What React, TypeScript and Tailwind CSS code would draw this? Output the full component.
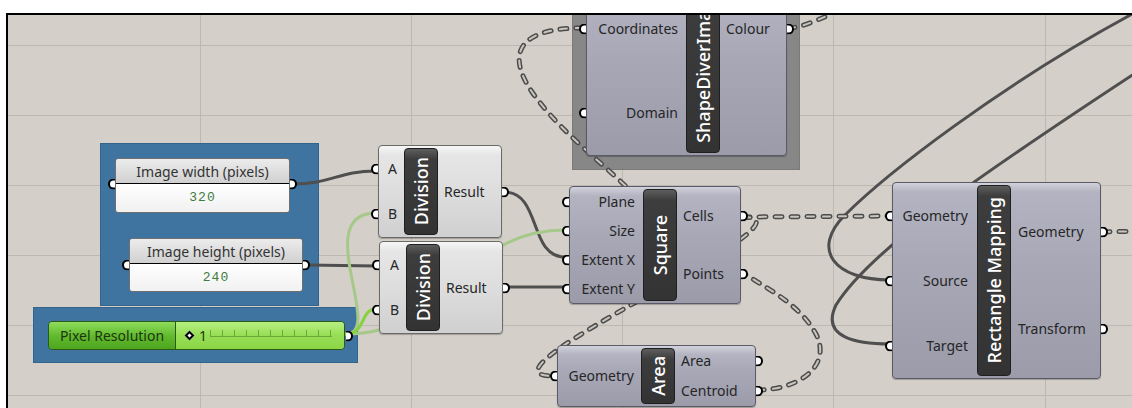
import React from "react";

type Slot = { label: string; grip?: boolean };

function Grip({ side }: { side: "in" | "out" }) {
  return side === "in" ? (
    <span className="absolute left-[-8px] top-1/2 -translate-y-1/2 w-[7px] h-[11px] rounded-l-full border-2 border-r-0 border-black bg-white" />
  ) : (
    <span className="absolute right-[-8px] top-1/2 -translate-y-1/2 w-[7px] h-[11px] rounded-r-full border-2 border-l-0 border-black bg-white" />
  );
}

function GhComponent({
  pos,
  leftW,
  name,
  inputs,
  outputs,
  light = false,
  clipName = false,
  padIn = "pr-[8px]",
  padOut = "pl-[6px]",
}: {
  pos: string;
  leftW: string;
  name: string;
  inputs: Slot[];
  outputs: Slot[];
  light?: boolean;
  clipName?: boolean;
  padIn?: string;
  padOut?: string;
}) {
  const body = light
    ? "bg-[linear-gradient(#f7f7f7_0px,#e6e6e6_9px,#dcdcdc_55%,#d0d0d0_100%)] border-[#6a6a6a]"
    : "bg-[linear-gradient(#d2d2dc_0px,#b3b3c1_9px,#a8a8b7_40%,#9b9baa_100%)] border-[#5a5a66]";
  return (
    <div className={`absolute flex rounded-[4px] border shadow-[0_1px_1px_rgba(0,0,0,0.25)] ${body} ${pos}`}>
      <div className={`flex flex-col ${leftW}`}>
        {inputs.map((s, i) => (
          <div key={i} className={`relative flex flex-1 items-center justify-end ${padIn}`}>
            {s.grip !== false && <Grip side="in" />}
            <span className="text-[14px] leading-none text-[#262626] whitespace-nowrap">{s.label}</span>
          </div>
        ))}
      </div>
      <div
        className={`my-[2px] w-[34px] flex flex-col items-center overflow-hidden rounded-[4px] border border-[#1f1f1f] bg-[linear-gradient(#5e5e5e_0px,#3d3d3d_10px,#333333_100%)] ${
          clipName ? "justify-end pb-[9px]" : "justify-center"
        }`}
      >
        <span className="[writing-mode:vertical-rl] rotate-180 text-[18px] leading-none font-medium text-white whitespace-nowrap">
          {name}
        </span>
      </div>
      <div className="flex flex-1 flex-col">
        {outputs.map((s, i) => (
          <div key={i} className={`relative flex flex-1 items-center ${padOut}`}>
            {s.grip !== false && <Grip side="out" />}
            <span className="text-[14px] leading-none text-[#262626] whitespace-nowrap">{s.label}</span>
          </div>
        ))}
      </div>
    </div>
  );
}

function Panel({ pos, title, value, gripTop }: { pos: string; title: string; value: string; gripTop: string }) {
  return (
    <div className={`absolute ${pos}`}>
      <div className="flex h-full flex-col overflow-hidden rounded-[3px] border border-[#6f6f6f]">
        <div className="flex h-[25px] items-center justify-center border-b border-black bg-[linear-gradient(#ececec,#d0d0d0)] text-[14px] text-[#333]">
          {title}
        </div>
        <div className="flex flex-1 items-center justify-center bg-[linear-gradient(#ffffff,#f1f1f1)] font-['Liberation_Mono',monospace] text-[13px] tracking-[1px] text-[#3d7b3d]">
          {value}
        </div>
      </div>
      <span className={`absolute left-[-7px] ${gripTop} -translate-y-1/2 w-[7px] h-[11px] rounded-l-full border-2 border-r-0 border-black bg-white`} />
      <span className={`absolute right-[-7px] ${gripTop} -translate-y-1/2 w-[7px] h-[11px] rounded-r-full border-2 border-l-0 border-black bg-white`} />
    </div>
  );
}

function ListWire({ d }: { d: string }) {
  return (
    <g fill="none" strokeLinecap="round">
      <path d={d} stroke="#4c4c4c" strokeWidth={5} strokeDasharray="7 9" />
      <path d={d} stroke="#c8c4be" strokeWidth={2} strokeDasharray="7 9" />
    </g>
  );
}

export default function App() {
  const gridX = [200, 411, 622, 833, 1045];
  const gridY = [45, 115, 185, 255, 325, 395];
  const ticks = [0, 12, 24, 36, 48, 60, 72, 84, 96, 108, 120];

  return (
    <div className="relative h-[408px] w-[1132px] overflow-hidden bg-white font-['Noto_Sans',sans-serif]">
      <div className="absolute left-[6px] top-[13px] h-[395px] w-[1126px] overflow-hidden border-l-2 border-t-2 border-black bg-[#d4cfc8]">
        <div className="absolute left-[-8px] top-[-15px] h-[408px] w-[1132px]">
          {/* grid */}
          <svg className="absolute inset-0" width={1132} height={408}>
            {gridX.map((x) => (
              <line key={x} x1={x + 0.5} y1={0} x2={x + 0.5} y2={408} stroke="#bdb8b1" strokeWidth={1} />
            ))}
            {gridY.map((y) => (
              <line key={y} x1={0} y1={y + 0.5} x2={1132} y2={y + 0.5} stroke="#bdb8b1" strokeWidth={1} />
            ))}
          </svg>

          {/* groups */}
          <div className="absolute left-[100px] top-[143px] h-[163px] w-[219px] border border-[#34648e] bg-[#3f74a1]" />
          <div className="absolute left-[33px] top-[307px] h-[56px] w-[325px] border border-[#34648e] bg-[#3f74a1]" />
          <div className="absolute left-[572px] top-[0px] h-[170px] w-[228px] border border-[#7a7a7a] bg-[#878787]" />

          {/* wires */}
          <svg className="absolute inset-0" width={1132} height={408}>
            <g fill="none" stroke="#4f4f4f" strokeWidth={3} strokeLinecap="round">
              <path d="M292,184 C332,184 338,171 376,171" />
              <path d="M307,265 L376,266" />
              <path d="M504,192 C542,192 528,257 565,257" />
              <path d="M505,287 L565,287" />
              <path d="M1140,70 C980,175 870,250 836,305 C820,338 858,344 890,344" />
              <path d="M1136,12 C1000,85 885,175 845,215 C810,250 835,280 890,280" />
            </g>
            <g fill="none" strokeWidth={3} strokeLinecap="round">
              <path d="M346,334 C385,334 310,213 376,213" stroke="#a6c98a" />
              <path d="M346,334 C450,334 460,230 565,230" stroke="#a6c98a" />
              <path d="M346,334 C366,334 360,309 376,309" stroke="#84d23c" />
            </g>
            <ListWire d="M743,217 L890,216" />
            <ListWire d="M743,217 C830,217 460,376 553,376" />
            <ListWire d="M757,390 C800,390 832,365 816,334 C800,305 770,290 743,273" />
            <ListWire d="M583,28 C520,28 505,52 532,92 C560,132 600,160 640,200" />
            <ListWire d="M788,28 C800,28 812,22 832,14" />
            <ListWire d="M1103,232 L1140,231" />
          </svg>

          {/* panels */}
          <Panel pos="left-[115px] top-[158px] w-[175px] h-[55px]" title="Image width (pixels)" value="320" gripTop="top-[26px]" />
          <Panel pos="left-[129px] top-[238px] w-[174px] h-[54px]" title="Image height (pixels)" value="240" gripTop="top-[27px]" />

          {/* slider */}
          <div className="absolute left-[48px] top-[321px] h-[29px] w-[297px]">
            <div className="flex h-full overflow-hidden rounded-[4px] border border-[#2e5a14]">
              <div className="flex w-[127px] items-center justify-center border-r border-[#2e5a14] bg-[linear-gradient(#8fdc5c,#62bb2e_50%,#4ea51f)] text-[14px] text-[#1c3610]">
                Pixel Resolution
              </div>
              <div className="relative flex flex-1 items-center bg-[linear-gradient(#b6f082,#98de55_50%,#8ad546)] pl-[10px]">
                <span className="h-[7px] w-[7px] rotate-45 border-2 border-black bg-white" />
                <span className="ml-[6px] text-[14px] leading-none text-[#1c3610]">1</span>
                <svg className="absolute left-[34px] top-[6px]" width={124} height={10}>
                  <line x1={0} y1={8.5} x2={122} y2={8.5} stroke="#6aa83a" strokeWidth={1} />
                  {ticks.map((t) => (
                    <line key={t} x1={t + 0.5} y1={2} x2={t + 0.5} y2={9} stroke="#6aa83a" strokeWidth={1} />
                  ))}
                </svg>
              </div>
            </div>
            <span className="absolute right-[-8px] top-1/2 h-[11px] w-[7px] -translate-y-1/2 rounded-r-full border-2 border-l-0 border-black bg-white" />
          </div>

          {/* components */}
          <GhComponent
            pos="left-[378px] top-[145px] w-[124px] h-[93px]"
            leftW="w-[25px]"
            name="Division"
            light
            inputs={[{ label: "A" }, { label: "B" }]}
            outputs={[{ label: "Result" }]}
            padIn="pr-[7px]"
          />
          <GhComponent
            pos="left-[379px] top-[241px] w-[124px] h-[93px]"
            leftW="w-[26px]"
            name="Division"
            light
            inputs={[{ label: "A" }, { label: "B" }]}
            outputs={[{ label: "Result" }]}
            padIn="pr-[7px]"
          />
          <GhComponent
            pos="left-[569px] top-[186px] w-[172px] h-[118px]"
            leftW="w-[73px]"
            name="Square"
            inputs={[{ label: "Plane" }, { label: "Size" }, { label: "Extent X" }, { label: "Extent Y" }]}
            outputs={[{ label: "Cells" }, { label: "Points" }]}
          />
          <GhComponent
            pos="left-[586px] top-[-14px] w-[201px] h-[170px]"
            leftW="w-[99px]"
            name="ShapeDiverImageSampler"
            clipName
            inputs={[{ label: "Coordinates" }, { label: "Domain" }]}
            outputs={[{ label: "Colour" }, { label: "", grip: false }]}
          />
          <GhComponent
            pos="left-[557px] top-[345px] w-[199px] h-[62px]"
            leftW="w-[83px]"
            name="Area"
            inputs={[{ label: "Geometry" }]}
            outputs={[{ label: "Area" }, { label: "Centroid" }]}
            padIn="pr-[7px]"
          />
          <GhComponent
            pos="left-[892px] top-[182px] w-[209px] h-[197px]"
            leftW="w-[84px]"
            name="Rectangle Mapping"
            inputs={[{ label: "Geometry" }, { label: "Source" }, { label: "Target" }]}
            outputs={[{ label: "Geometry" }, { label: "Transform" }]}
            padIn="pr-[9px]"
            padOut="pl-[7px]"
          />
        </div>
      </div>
    </div>
  );
}
